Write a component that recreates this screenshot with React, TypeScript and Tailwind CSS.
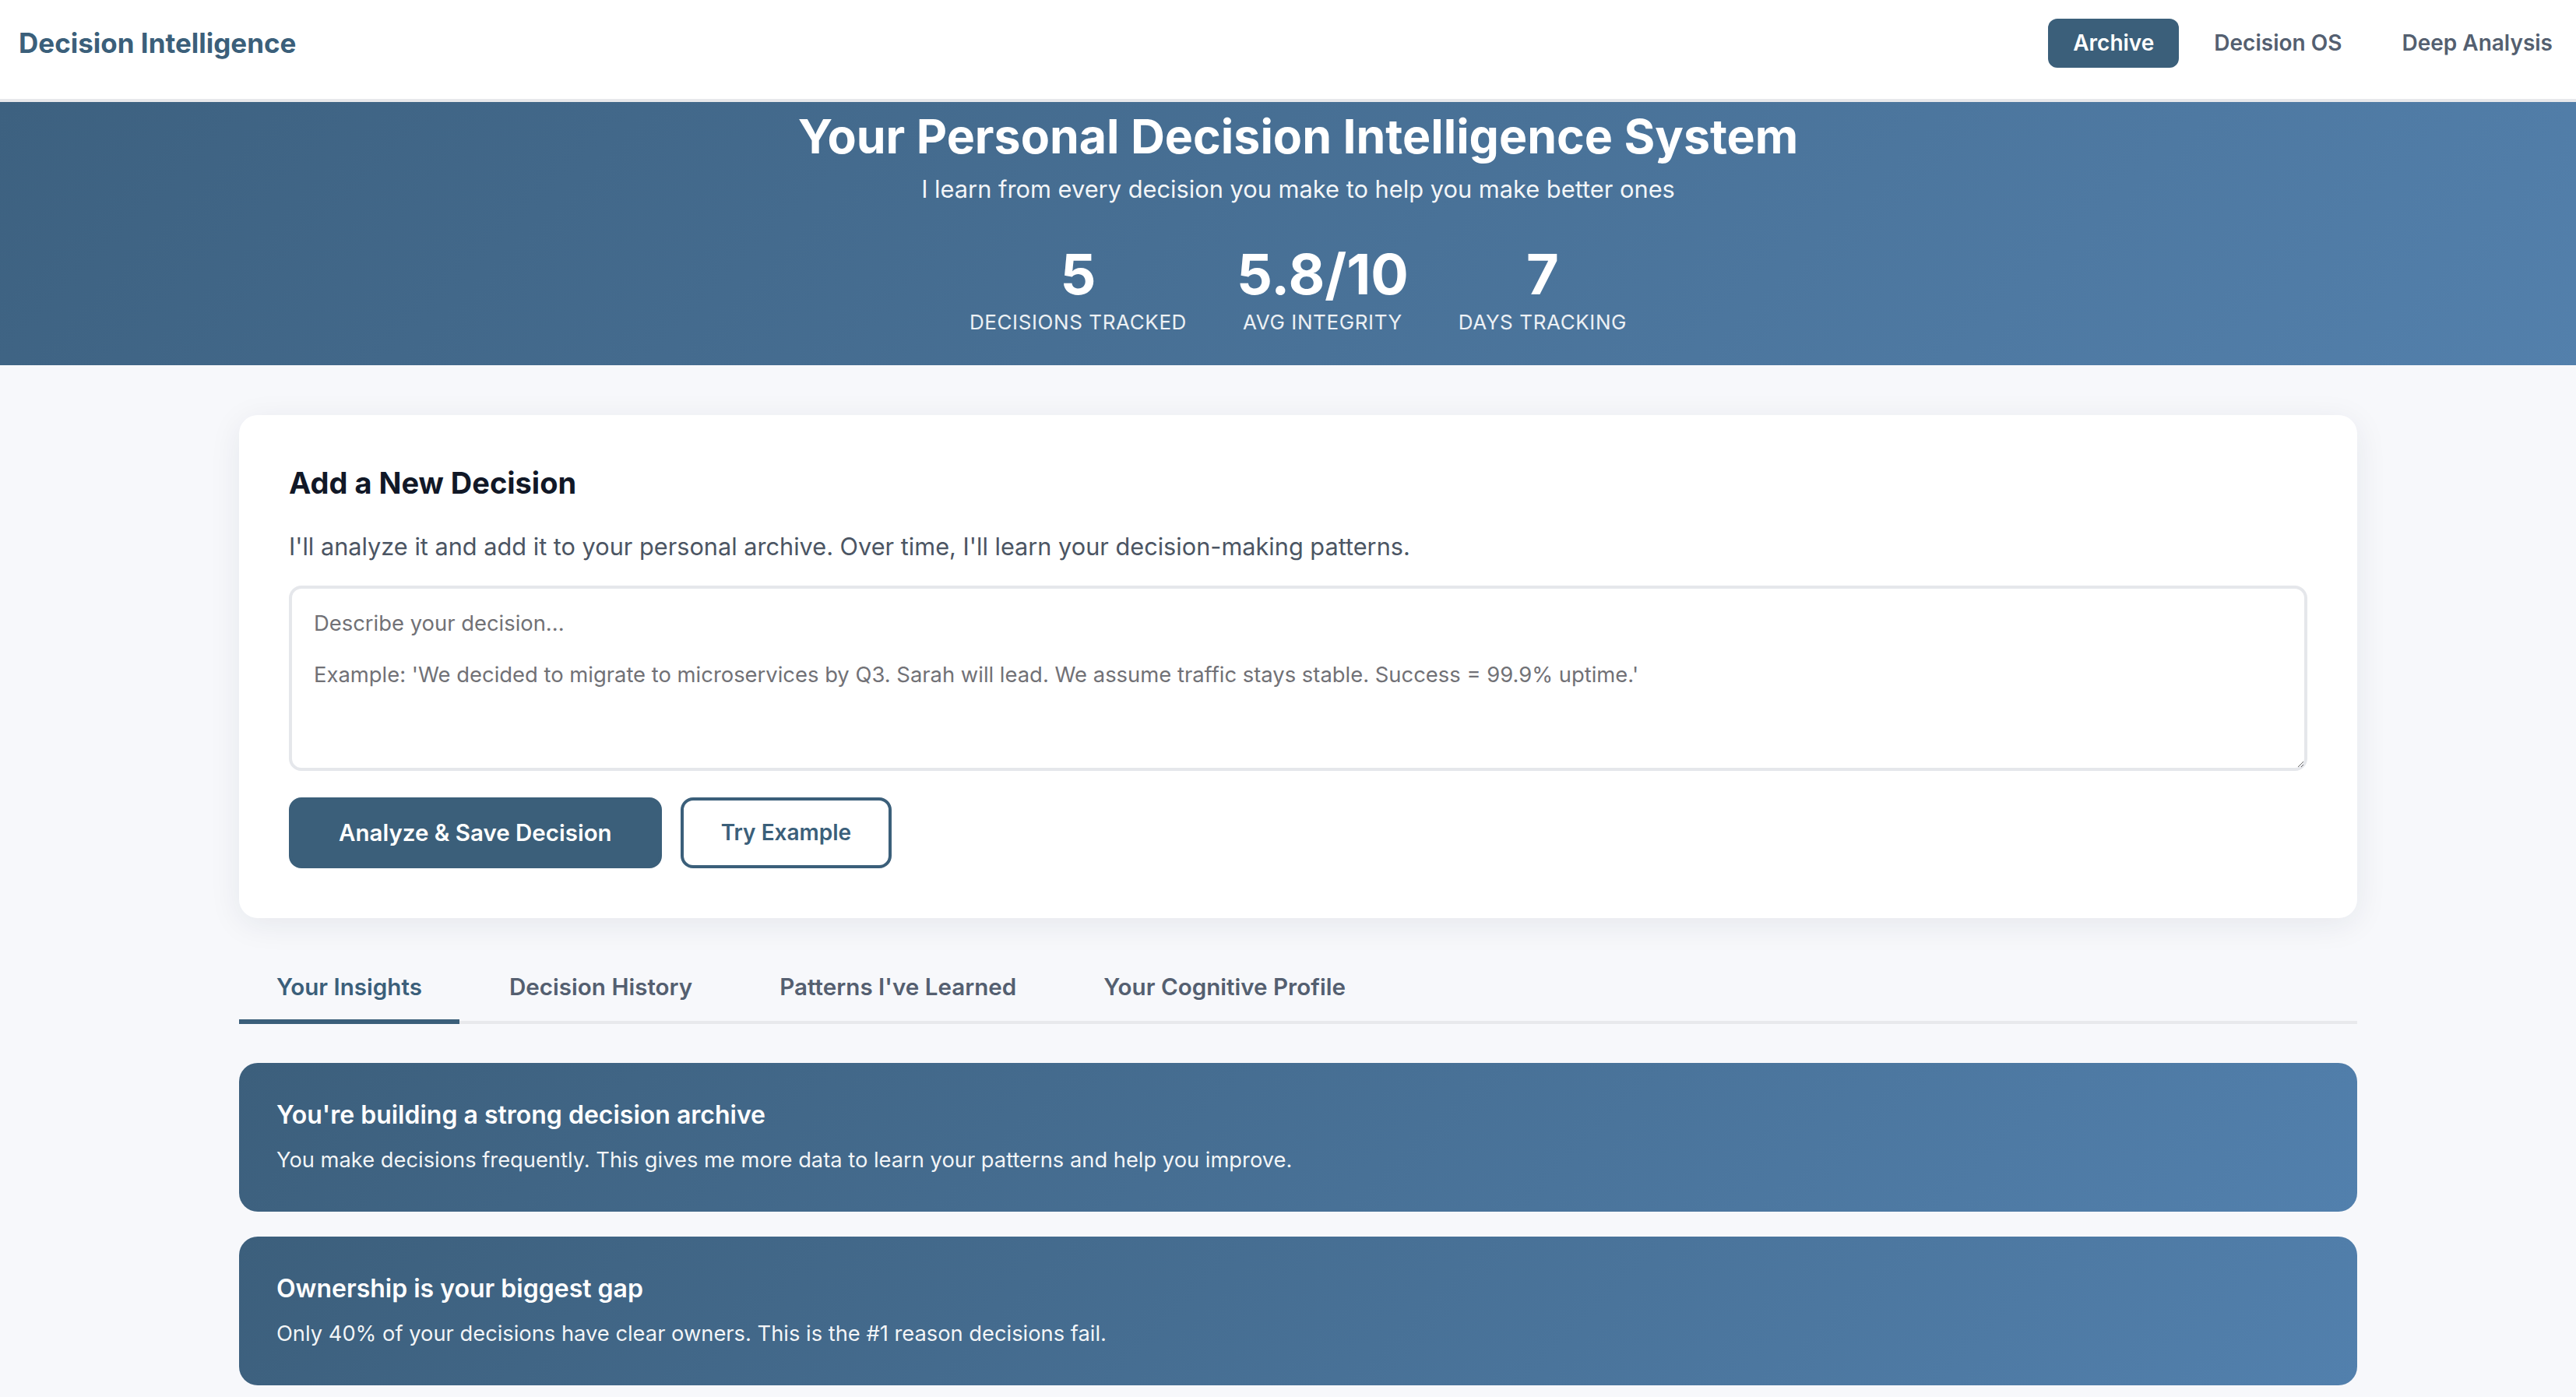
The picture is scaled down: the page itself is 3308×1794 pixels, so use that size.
import React, { useState } from 'react';

const stats = [
  { value: '5', label: 'Decisions Tracked' },
  { value: '5.8/10', label: 'Avg Integrity' },
  { value: '7', label: 'Days Tracking' },
];

const tabs = ['Your Insights', 'Decision History', "Patterns I've Learned", 'Your Cognitive Profile'];

const insights = [
  {
    title: "You're building a strong decision archive",
    body: 'You make decisions frequently. This gives me more data to learn your patterns and help you improve.',
  },
  {
    title: 'Ownership is your biggest gap',
    body: 'Only 40% of your decisions have clear owners. This is the #1 reason decisions fail.',
  },
];

export default function App() {
  const [activeTab, setActiveTab] = useState(0);
  const [text, setText] = useState('');

  return (
    <div className="h-screen w-full overflow-hidden bg-[#f7f8fb] font-[Inter,'Liberation_Sans',sans-serif] antialiased">
      <div className="w-[3334px]">
        {/* Top navigation */}
        <header className="h-[131px] border-b-4 border-[#e7e8eb] bg-white px-6">
          <div className="flex h-[110px] items-center justify-between">
            <h1 className="text-[35px] font-bold leading-[44px] text-[#3b5f7a]">Decision Intelligence</h1>
            <nav className="flex items-center gap-[13px]">
              <button className="rounded-xl bg-[#3b5f7a] px-8 py-3 text-[28px] font-semibold leading-[39px] text-white">
                Archive
              </button>
              <button className="rounded-xl px-8 py-3 text-[28px] font-semibold leading-[39px] text-[#545f70]">
                Decision OS
              </button>
              <button className="rounded-xl px-8 py-3 text-[28px] font-semibold leading-[39px] text-[#545f70]">
                Deep Analysis
              </button>
            </nav>
          </div>
        </header>

        {/* Hero */}
        <section className="h-[338px] bg-[linear-gradient(135deg,#3d6180_0%,#5380ac_100%)] pt-2 text-center text-white">
          <h2 className="text-[60.8px] font-bold leading-[72px]">Your Personal Decision Intelligence System</h2>
          <p className="mt-[9px] text-[30.8px] leading-[45px] text-white/95">
            I learn from every decision you make to help you make better ones
          </p>
          <div className="mt-[51px] flex justify-center gap-16">
            {stats.map((s) => (
              <div key={s.label} className="flex flex-col items-center">
                <div className="text-[72px] font-bold leading-[72px]">{s.value}</div>
                <div className="mt-2 text-[26px] uppercase leading-[36px] tracking-[0.6px] text-white/90">{s.label}</div>
              </div>
            ))}
          </div>
        </section>

        <main className="mx-auto w-[2720px] pt-16">
          {/* Add decision card */}
          <div className="rounded-3xl bg-white p-16 shadow-[0_8px_40px_rgba(30,40,60,0.08)]">
            <h3 className="text-[38px] font-bold leading-[46px] text-[#111827]">Add a New Decision</h3>
            <p className="mt-9 text-[30.7px] leading-[45px] text-[#4b5563]">
              I'll analyze it and add it to your personal archive. Over time, I'll learn your decision-making patterns.
            </p>
            <textarea
              value={text}
              onChange={(e) => setText(e.target.value)}
              placeholder={
                "Describe your decision...\n\nExample: 'We decided to migrate to microservices by Q3. Sarah will lead. We assume traffic stays stable. Success = 99.9% uptime.'"
              }
              className="mt-7 block h-[238px] w-full rounded-2xl border-4 border-[#e5e7eb] px-7 pt-7 pb-6 text-[27.4px] leading-[33px] text-[#374151] outline-none placeholder:text-[#717176]"
            />
            <div className="mt-[34px] flex gap-6">
              <button className="rounded-2xl border-4 border-[#3b5f7a] bg-[#3b5f7a] px-[60px] py-6 text-[29.5px] font-semibold leading-[35px] text-white">
                Analyze &amp; Save Decision
              </button>
              <button className="rounded-2xl border-4 border-[#3b5f7a] bg-white px-12 py-6 text-[28px] font-semibold leading-[35px] text-[#3b5f7a]">
                Try Example
              </button>
            </div>
          </div>

          {/* Tabs */}
          <div className="mt-[47px] flex gap-4 border-b-4 border-[#e8e9ec]">
            {tabs.map((t, i) => (
              <button
                key={t}
                onClick={() => setActiveTab(i)}
                className={
                  i === activeTab
                    ? '-mb-[4px] border-b-[6px] border-[#3b5f7a] px-12 py-6 text-[29.6px] font-semibold leading-[35px] text-[#3b5f7a]'
                    : '-mb-[4px] border-b-[6px] border-transparent px-12 py-6 text-[29.6px] font-semibold leading-[35px] text-[#545f70]'
                }
              >
                {t}
              </button>
            ))}
          </div>

          {/* Insights */}
          <div className="mt-[50px] flex flex-col gap-8">
            {insights.map((c) => (
              <div
                key={c.title}
                className="h-[191px] rounded-3xl bg-[linear-gradient(135deg,#3c5f7c_0%,#5280ad_100%)] px-12 py-12 text-white"
              >
                <h4 className="text-[32px] font-semibold leading-[38px]">{c.title}</h4>
                <p className="mt-[18px] text-[27.3px] leading-[42px] text-white/95">{c.body}</p>
              </div>
            ))}
          </div>
        </main>
      </div>
    </div>
  );
}
